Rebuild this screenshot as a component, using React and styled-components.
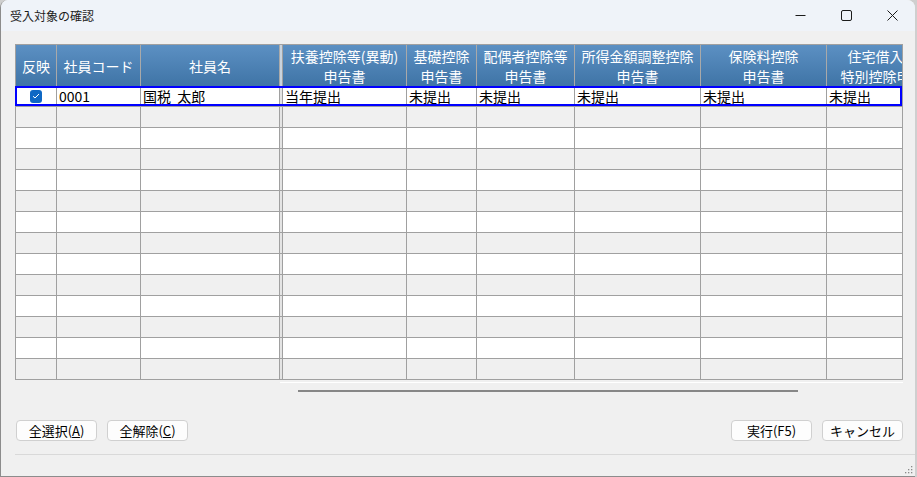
import React from 'react'
import styled, { createGlobalStyle } from 'styled-components'

const GlobalStyle = createGlobalStyle`
  html, body {
    margin: 0;
    padding: 0;
    background: #cfcfcf;
  }
  * {
    box-sizing: border-box;
  }
`

const FONT = `"Noto Sans CJK JP", "Noto Sans", "Liberation Sans", sans-serif`

const FROZEN = [
  { key: 'reflect', label: ['反映'], w: 41, check: true },
  { key: 'code', label: ['社員コード'], w: 84 },
  { key: 'name', label: ['社員名'], w: 139 },
]
const SCROLL = [
  { key: 'fuyou', label: ['扶養控除等(異動)', '申告書'], w: 124 },
  { key: 'kiso', label: ['基礎控除', '申告書'], w: 70 },
  { key: 'haigu', label: ['配偶者控除等', '申告書'], w: 98 },
  { key: 'shotoku', label: ['所得金額調整控除', '申告書'], w: 126 },
  { key: 'hoken', label: ['保険料控除', '申告書'], w: 126 },
  { key: 'jutaku', label: ['住宅借入金等', '特別控除申告書'], w: 126 },
]

const ROWS = [
  {
    reflect: true,
    code: '0001',
    name: '国税 太郎',
    fuyou: '当年提出',
    kiso: '未提出',
    haigu: '未提出',
    shotoku: '未提出',
    hoken: '未提出',
    jutaku: '未提出',
  },
]
const ROW_COUNT = 14

const Window = styled.div`
  width: 915px;
  height: 477px;
  display: flex;
  flex-direction: column;
  background: #f0f0f0;
  border-left: 1px solid #8c8c8c;
  border-bottom: 1px solid #8c8c8c;
  border-radius: 8px 8px 0 0;
  overflow: hidden;
  font-family: ${FONT};
`
const TitleBar = styled.div`
  height: 31px;
  flex-shrink: 0;
  display: flex;
  align-items: center;
  background: #eff3f9;
`
const Title = styled.div`
  flex: 1;
  padding-left: 9px;
  font-size: 12px;
  color: #1b1b1b;
`
const Controls = styled.div`
  display: flex;
  height: 100%;
`
const ControlButton = styled.div`
  width: 46px;
  height: 100%;
  display: flex;
  align-items: center;
  justify-content: center;
`
const Body = styled.div`
  flex: 1;
  display: flex;
  flex-direction: column;
  padding: 13px 0 0 14px;
`
const GridFrame = styled.div`
  position: relative;
  width: 888px;
  border: 1px solid #a0a0a0;
  border-bottom: none;
  background: #f0f0f0;
`
const GridClip = styled.div`
  overflow: hidden;
`
const Row = styled.div`
  display: flex;
  height: ${(p) => (p.$header ? 41 : 21)}px;
  background: ${(p) => (p.$header ? 'transparent' : p.$odd ? '#f0f0f0' : '#ffffff')};
  border-bottom: ${(p) => (p.$header ? 'none' : '1px solid #a0a0a0')};
`
const HeadCell = styled.div`
  flex: 0 0 ${(p) => p.$w}px;
  width: ${(p) => p.$w}px;
  display: flex;
  flex-direction: column;
  justify-content: center;
  align-items: center;
  border-right: 1px solid #a9a9a9;
  background: linear-gradient(#5c90c3, #3f74a6);
  color: #ffffff;
  font-size: 14px;
  line-height: 20px;
  white-space: nowrap;
  overflow: hidden;
`
const Cell = styled.div`
  flex: 0 0 ${(p) => p.$w}px;
  width: ${(p) => p.$w}px;
  display: flex;
  align-items: center;
  justify-content: ${(p) => (p.$center ? 'center' : 'flex-start')};
  padding-left: ${(p) => (p.$center ? 0 : 2)}px;
  border-right: 1px solid #a0a0a0;
  font-size: 14px;
  line-height: 20px;
  word-spacing: 3px;
  color: #000000;
  white-space: pre;
  overflow: hidden;
`
const Splitter = styled.div`
  flex: 0 0 3px;
  width: 3px;
  background: ${(p) => (p.$header ? '#c9d3dd' : '#e4e4e4')};
  border-right: 1px solid #a0a0a0;
`
const Selection = styled.div`
  position: absolute;
  top: 41px;
  left: -1px;
  right: 0;
  height: 20px;
  border: 2px solid #0000ff;
  pointer-events: none;
`
const CheckBox = styled.div`
  width: 12px;
  height: 13px;
  margin-right: 1px;
  border-radius: 3px;
  background: #0f68c4;
  display: flex;
  align-items: center;
  justify-content: center;
`
const ScrollArea = styled.div`
  height: 21px;
  padding-left: 265px;
  display: flex;
  flex-direction: column;
`
const TrackEdge = styled.div`
  width: 623px;
  height: 1px;
  margin-top: 2px;
  background: #ffffff;
`
const Thumb = styled.div`
  width: 500px;
  height: 2px;
  margin: 7px 0 0 18px;
  background: #878787;
`
const ButtonBar = styled.div`
  width: 888px;
  display: flex;
  justify-content: space-between;
  margin-top: 19px;
  padding-left: 1px;
`
const ButtonGroup = styled.div`
  display: flex;
  gap: 10px;
`
const Button = styled.button`
  width: 81px;
  height: 21px;
  padding: 0;
  border: 1px solid #d0d0d0;
  border-radius: 4px;
  background: #fdfdfd;
  font-family: ${FONT};
  font-size: 13px;
  line-height: 19px;
  color: #000000;
`
const Footer = styled.div`
  margin-top: auto;
  height: 22px;
  border-top: 1px solid #d9d9d9;
  display: flex;
  justify-content: flex-end;
  align-items: flex-end;
  padding: 0 2px 2px 0;
`

const CheckIcon = () => (
  <svg width="8" height="6" viewBox="0 0 8 6">
    <path d="M1 3.2 L3 5 L7 1" fill="none" stroke="#ffffff" strokeWidth="1" />
  </svg>
)

const Grip = () => (
  <svg width="9" height="9" viewBox="0 0 9 9">
    {[
      [7, 1],
      [4, 4],
      [7, 4],
      [1, 7],
      [4, 7],
      [7, 7],
    ].map(([x, y]) => (
      <rect key={`${x}-${y}`} x={x} y={y} width="1.3" height="1.3" fill="#8a8a8a" />
    ))}
  </svg>
)

const WinIcon = ({ type }) => (
  <svg width="11" height="11" viewBox="0 0 11 11">
    {type === 'min' && <path d="M0.5 5.5 H10.5" stroke="#1b1b1b" strokeWidth="1" />}
    {type === 'max' && (
      <rect x="0.5" y="0.5" width="10" height="10" rx="1.5" fill="none" stroke="#1b1b1b" strokeWidth="1" />
    )}
    {type === 'close' && (
      <path d="M0.5 0.5 L10.5 10.5 M10.5 0.5 L0.5 10.5" stroke="#1b1b1b" strokeWidth="1" />
    )}
  </svg>
)

const renderCell = (col, row) => {
  if (col.check) {
    return (
      <Cell key={col.key} $w={col.w} $center>
        {row && row.reflect && (
          <CheckBox>
            <CheckIcon />
          </CheckBox>
        )}
      </Cell>
    )
  }
  return (
    <Cell key={col.key} $w={col.w}>
      {row ? row[col.key] : ''}
    </Cell>
  )
}

export default function App() {
  const rows = Array.from({ length: ROW_COUNT }, (_, i) => ROWS[i] || null)
  return (
    <>
      <GlobalStyle />
      <Window>
        <TitleBar>
          <Title>受入対象の確認</Title>
          <Controls>
            <ControlButton>
              <WinIcon type="min" />
            </ControlButton>
            <ControlButton>
              <WinIcon type="max" />
            </ControlButton>
            <ControlButton>
              <WinIcon type="close" />
            </ControlButton>
          </Controls>
        </TitleBar>
        <Body>
          <GridFrame>
            <GridClip>
              <Row $header>
                {FROZEN.map((c) => (
                  <HeadCell key={c.key} $w={c.w}>
                    {c.label.map((l) => (
                      <span key={l}>{l}</span>
                    ))}
                  </HeadCell>
                ))}
                <Splitter $header />
                {SCROLL.map((c) => (
                  <HeadCell key={c.key} $w={c.w}>
                    {c.label.map((l) => (
                      <span key={l}>{l}</span>
                    ))}
                  </HeadCell>
                ))}
              </Row>
              {rows.map((row, i) => (
                <Row key={i} $odd={i % 2 === 1}>
                  {FROZEN.map((c) => renderCell(c, row))}
                  <Splitter />
                  {SCROLL.map((c) => renderCell(c, row))}
                </Row>
              ))}
            </GridClip>
            <Selection />
          </GridFrame>
          <ScrollArea>
            <TrackEdge />
            <Thumb />
          </ScrollArea>
          <ButtonBar>
            <ButtonGroup>
              <Button>
                全選択(<u>A</u>)
              </Button>
              <Button>
                全解除(<u>C</u>)
              </Button>
            </ButtonGroup>
            <ButtonGroup>
              <Button>実行(F5)</Button>
              <Button>キャンセル</Button>
            </ButtonGroup>
          </ButtonBar>
          <Footer>
            <Grip />
          </Footer>
        </Body>
      </Window>
    </>
  )
}
